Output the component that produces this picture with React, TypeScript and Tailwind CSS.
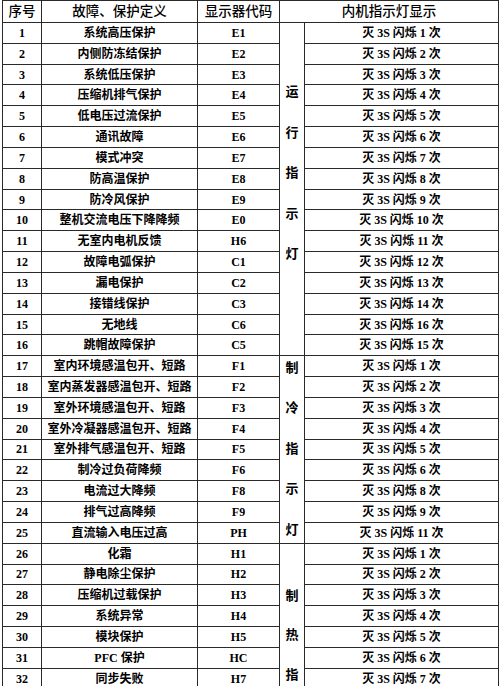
import React from "react";

type Row = [string, string, string, string];

const rows: Row[] = [
  ["1", "系统高压保护", "E1", "1"],
  ["2", "内侧防冻结保护", "E2", "2"],
  ["3", "系统低压保护", "E3", "3"],
  ["4", "压缩机排气保护", "E4", "4"],
  ["5", "低电压过流保护", "E5", "5"],
  ["6", "通讯故障", "E6", "6"],
  ["7", "模式冲突", "E7", "7"],
  ["8", "防高温保护", "E8", "8"],
  ["9", "防冷风保护", "E9", "9"],
  ["10", "整机交流电压下降降频", "E0", "10"],
  ["11", "无室内电机反馈", "H6", "11"],
  ["12", "故障电弧保护", "C1", "12"],
  ["13", "漏电保护", "C2", "13"],
  ["14", "接错线保护", "C3", "14"],
  ["15", "无地线", "C6", "16"],
  ["16", "跳帽故障保护", "C5", "15"],
  ["17", "室内环境感温包开、短路", "F1", "1"],
  ["18", "室内蒸发器感温包开、短路", "F2", "2"],
  ["19", "室外环境感温包开、短路", "F3", "3"],
  ["20", "室外冷凝器感温包开、短路", "F4", "4"],
  ["21", "室外排气感温包开、短路", "F5", "5"],
  ["22", "制冷过负荷降频", "F6", "6"],
  ["23", "电流过大降频", "F8", "8"],
  ["24", "排气过高降频", "F9", "9"],
  ["25", "直流输入电压过高", "PH", "11"],
  ["26", "化霜", "H1", "1"],
  ["27", "静电除尘保护", "H2", "2"],
  ["28", "压缩机过载保护", "H3", "3"],
  ["29", "系统异常", "H4", "4"],
  ["30", "模块保护", "H5", "5"],
  ["31", "PFC 保护", "HC", "6"],
  ["32", "同步失败", "H7", "7"],
];

const cell = "border border-[#2a2a2a] p-0 text-center align-middle";

function VerticalCell({ chars, span, box }: { chars: string[]; span: number; box: string }) {
  return (
    <td rowSpan={span} className="border border-[#2a2a2a] p-0 align-top">
      <div className={box}>
        {chars.map((c, i) => (
          <span key={i} className="block text-[13px] leading-[18px]">
            {c}
          </span>
        ))}
      </div>
    </td>
  );
}

export default function App() {
  return (
    <div
      className="bg-white w-[500px] h-[686px] overflow-hidden text-black"
      style={{ fontFamily: '"Liberation Serif", "Noto Sans CJK SC", serif' }}
    >
      <table className="ml-[2px] w-[496px] border-collapse table-fixed">
        <colgroup>
          <col className="w-[39px]" />
          <col className="w-[156px]" />
          <col className="w-[82px]" />
          <col className="w-[25px]" />
          <col className="w-[194px]" />
        </colgroup>
        <thead>
          <tr className="h-[22px]">
            <th className={`${cell} text-[13.5px] font-medium leading-[20px]`}>序号</th>
            <th className={`${cell} text-[13.5px] font-medium leading-[20px]`}>故障、保护定义</th>
            <th className={`${cell} text-[13.5px] font-medium leading-[20px]`}>显示器代码</th>
            <th colSpan={2} className={`${cell} text-[13.5px] font-medium leading-[20px]`}>
              内机指示灯显示
            </th>
          </tr>
        </thead>
        <tbody>
          {rows.map((r, i) => (
            <tr key={r[0]} className="h-[20.84px] text-[12px] font-bold leading-[16px]">
              <td className={cell}>{r[0]}</td>
              <td className={cell}>{r[1]}</td>
              <td className={cell}>{r[2]}</td>
              {i === 0 && (
                <VerticalCell
                  span={16}
                  chars={["运", "行", "指", "示", "灯"]}
                  box="h-[330px] flex flex-col items-center pt-[60px] gap-[22.5px]"
                />
              )}
              {i === 16 && (
                <VerticalCell
                  span={9}
                  chars={["制", "冷", "指", "示", "灯"]}
                  box="h-[185px] flex flex-col items-center justify-center gap-[22.5px]"
                />
              )}
              {i === 25 && (
                <VerticalCell
                  span={7}
                  chars={["制", "热", "指", "示", "灯"]}
                  box="h-[140px] overflow-hidden flex flex-col items-center pt-[43px] gap-[21.5px]"
                />
              )}
              <td className={cell}>
                灭 3S 闪烁 {r[3]} 次
              </td>
            </tr>
          ))}
        </tbody>
      </table>
    </div>
  );
}
